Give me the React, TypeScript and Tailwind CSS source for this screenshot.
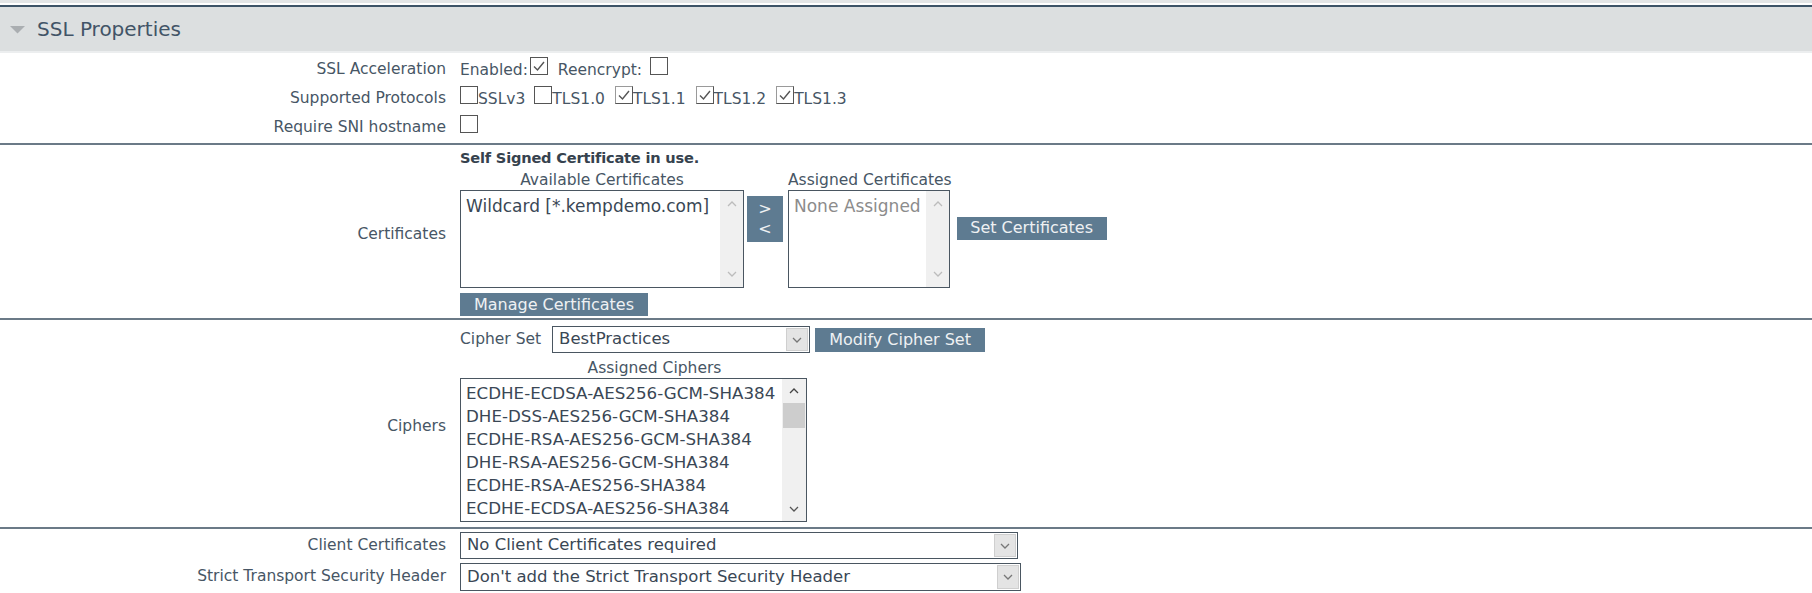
import React from "react";

const labelCls = "text-right text-[15.5px] text-[#475665] pr-0";

function Check({ checked = false, soft = false }: { checked?: boolean; soft?: boolean }) {
  return (
    <span
      className={`inline-block w-[18px] h-[18px] bg-white border shrink-0 ${
        soft ? "border-t-[#9a9a9a] border-l-[#9a9a9a] border-r-[#555] border-b-[#555]" : "border-[#555]"
      }`}
    >
      {checked && (
        <svg viewBox="0 0 16 16" className="w-full h-full">
          <polyline points="3,8.5 6.5,12 13,4" fill="none" stroke="#555" strokeWidth="1.4" />
        </svg>
      )}
    </span>
  );
}

function Chevron({ up = false, color = "#bcbcbc" }: { up?: boolean; color?: string }) {
  return (
    <svg width="10" height="6" viewBox="0 0 10 6">
      <polyline
        points={up ? "1,5 5,1 9,5" : "1,1 5,5 9,1"}
        fill="none"
        stroke={color}
        strokeWidth="1.3"
      />
    </svg>
  );
}

function Button({ children, className = "" }: { children: React.ReactNode; className?: string }) {
  return (
    <div
      className={`bg-[#5e7b91] text-[#eef1f3] text-[16px] leading-none flex items-center justify-center ${className}`}
    >
      {children}
    </div>
  );
}

function Select({ value, className = "" }: { value: string; className?: string }) {
  return (
    <div className={`flex border border-[#4a5661] bg-white ${className}`}>
      <div className="flex-1 px-[6px] flex items-center text-[16.5px] text-[#3a4755] whitespace-nowrap overflow-hidden">
        {value}
      </div>
      <div className="w-[22px] m-[1px] bg-[#e4e4e4] border border-[#cfcfcf] flex items-center justify-center">
        <Chevron color="#777" />
      </div>
    </div>
  );
}

function CertList({ item, muted = false, width }: { item: string; muted?: boolean; width: string }) {
  return (
    <div className={`flex h-[98px] border border-[#4a5661] bg-white ${width}`}>
      <div
        className={`flex-1 pl-[5px] pt-[5px] text-[17px] leading-[20px] whitespace-nowrap overflow-hidden ${
          muted ? "text-[#8c8c8c]" : "text-[#3a4755]"
        }`}
      >
        {item}
      </div>
      <div className="w-[23px] bg-[#f0f0f0] flex flex-col items-center justify-between py-[10px]">
        <Chevron up />
        <Chevron />
      </div>
    </div>
  );
}

const ciphers = [
  "ECDHE-ECDSA-AES256-GCM-SHA384",
  "DHE-DSS-AES256-GCM-SHA384",
  "ECDHE-RSA-AES256-GCM-SHA384",
  "DHE-RSA-AES256-GCM-SHA384",
  "ECDHE-RSA-AES256-SHA384",
  "ECDHE-ECDSA-AES256-SHA384",
];

export default function App() {
  return (
    <div className="w-[1812px] h-[593px] overflow-hidden bg-white font-['DejaVu_Sans',sans-serif]">
      <div className="h-[3px] bg-[#e3e5e6]" />
      <div className="h-[2px] bg-white" />
      <div className="h-[2px] bg-[#3d5367]" />
      <div className="h-[44px] bg-[#dcdfe0] flex items-center">
        <svg width="15" height="8" viewBox="0 0 15 8" className="ml-[10px] mt-[2px]">
          <polygon points="0,0 15,0 7.5,7.5" fill="#aaaeb1" />
        </svg>
        <span className="ml-[12px] text-[20px] text-[#425467]">SSL Properties</span>
      </div>
      <div className="h-[2px] bg-[#eceeef]" />

      {/* general */}
      <div className="grid grid-cols-[446px_1fr] gap-x-[14px] pt-[2px] pb-[1px]">
        <div className={`${labelCls} h-[29px] flex items-center justify-end`}>SSL Acceleration</div>
        <div className="h-[29px] flex items-center">
          <div className="flex items-baseline text-[15.5px] text-[#475665]">
            <span>Enabled:</span>
            <span className="ml-[2px] mr-[10px]">
              <Check checked />
            </span>
            <span>Reencrypt:</span>
            <span className="ml-[8px]">
              <Check />
            </span>
          </div>
        </div>

        <div className={`${labelCls} h-[29px] flex items-center justify-end`}>Supported Protocols</div>
        <div className="h-[29px] flex items-center">
          <div className="flex items-baseline text-[15.5px] text-[#475665]">
            <Check />
            <span className="mr-[9px]">SSLv3</span>
            <Check />
            <span className="mr-[10px]">TLS1.0</span>
            <Check checked soft />
            <span className="mr-[10px]">TLS1.1</span>
            <Check checked soft />
            <span className="mr-[10px]">TLS1.2</span>
            <Check checked soft />
            <span>TLS1.3</span>
          </div>
        </div>

        <div className={`${labelCls} h-[29px] flex items-center justify-end`}>Require SNI hostname</div>
        <div className="h-[29px] flex items-center">
          <div className="flex items-baseline text-[15.5px]">
            <span className="w-0 overflow-hidden">&nbsp;</span>
            <Check />
          </div>
        </div>
      </div>

      <div className="h-[2px] bg-[#6b7a87]" />

      {/* certificates */}
      <div className="grid grid-cols-[446px_1fr] gap-x-[14px] pt-[3px] pb-[2px]">
        <div className={`${labelCls} flex items-center justify-end pt-[6px]`}>Certificates</div>
        <div className="flex flex-col items-start">
          <div className="text-[14.6px] font-bold leading-[20px] text-[#36424e] tracking-[-0.2px]">
            Self Signed Certificate in use.
          </div>
          <div className="flex items-center mt-[2px]">
            <div className="flex flex-col">
              <div className="text-center text-[15.5px] leading-[20px] text-[#475665]">Available Certificates</div>
              <CertList item="Wildcard [*.kempdemo.com]" width="w-[284px]" />
            </div>
            <Button className="ml-[3px] w-[36px] h-[46px] flex-col !leading-[20px] mt-[-20px]">
              <span>&gt;</span>
              <span>&lt;</span>
            </Button>
            <div className="flex flex-col ml-[5px]">
              <div className="text-center text-[15.5px] leading-[20px] text-[#475665] whitespace-nowrap">
                Assigned Certificates
              </div>
              <CertList item="None Assigned" muted width="w-[162px]" />
            </div>
            <Button className="ml-[5px] w-[150px] h-[23px] mt-[-2px]">Set Certificates</Button>
          </div>
          <Button className="mt-[5px] w-[188px] h-[23px]">Manage Certificates</Button>
        </div>
      </div>

      <div className="h-[2px] bg-[#6b7a87]" />

      {/* ciphers */}
      <div className="grid grid-cols-[446px_1fr] gap-x-[14px] pt-[6px] pb-[5px]">
        <div className={`${labelCls} flex items-center justify-end pt-[6px]`}>Ciphers</div>
        <div className="flex flex-col items-start">
          <div className="flex items-center">
            <span className="text-[15.5px] text-[#475665]">Cipher Set</span>
            <Select value="BestPractices" className="ml-[11px] w-[258px] h-[27px]" />
            <Button className="ml-[5px] w-[170px] h-[24px]">Modify Cipher Set</Button>
          </div>
          <div className="w-[347px] pl-[42px] mt-[5px] text-center text-[15.5px] leading-[20px] text-[#475665]">
            Assigned Ciphers
          </div>
          <div className="flex w-[347px] h-[144px] border border-[#4a5661] bg-white">
            <div className="flex-1 pl-[5px] pt-[3px] text-[16.7px] leading-[23px] text-[#3a4755] whitespace-nowrap overflow-hidden">
              {ciphers.map((c) => (
                <div key={c}>{c}</div>
              ))}
            </div>
            <div className="w-[24px] bg-[#f0f0f0] flex flex-col items-center">
              <div className="h-[24px] flex items-center justify-center">
                <Chevron up color="#444" />
              </div>
              <div className="w-[22px] h-[25px] bg-[#cdcdcd]" />
              <div className="flex-1" />
              <div className="h-[24px] flex items-center justify-center">
                <Chevron color="#555" />
              </div>
            </div>
          </div>
        </div>
      </div>

      <div className="h-[2px] bg-[#6b7a87]" />

      {/* client */}
      <div className="grid grid-cols-[446px_1fr] gap-x-[14px] gap-y-[4px] pt-[3px]">
        <div className={`${labelCls} flex items-center justify-end`}>Client Certificates</div>
        <Select value="No Client Certificates required" className="w-[558px] h-[27px]" />
        <div className={`${labelCls} flex items-center justify-end`}>Strict Transport Security Header</div>
        <Select value="Don't add the Strict Transport Security Header" className="w-[561px] h-[28px]" />
      </div>
    </div>
  );
}
